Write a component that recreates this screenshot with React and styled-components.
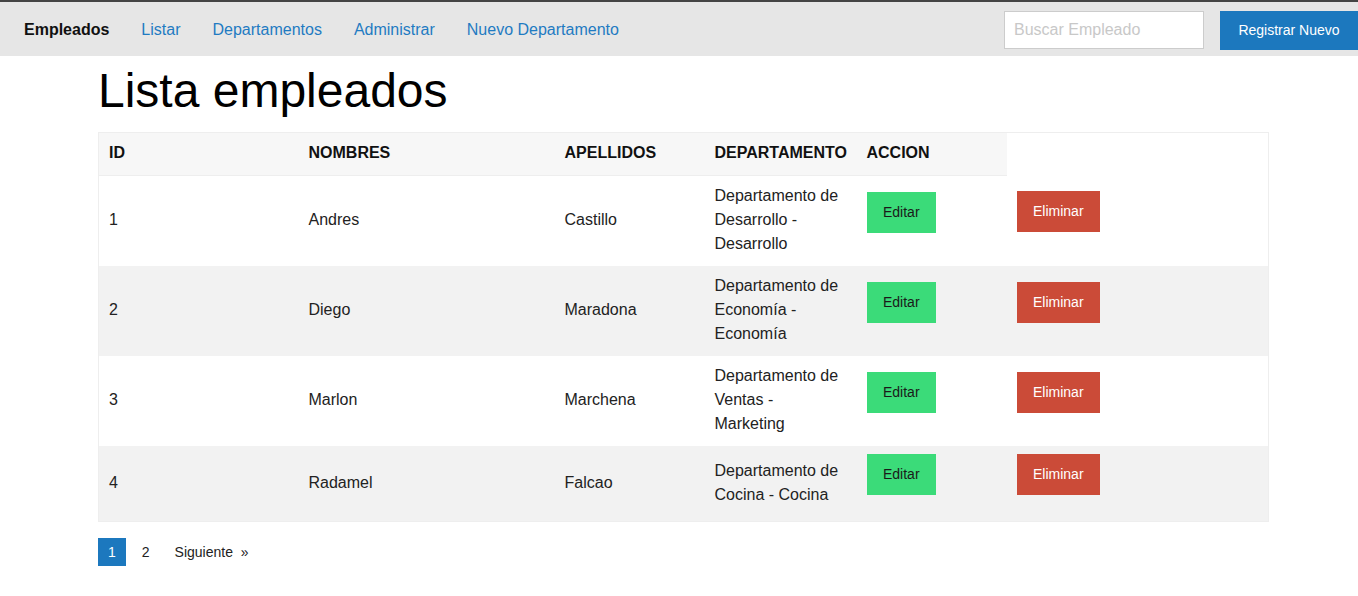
import React from "react"
import styled, { createGlobalStyle } from "styled-components"

const empleados = [
  { id: 1, nombre: "Andres", apellido: "Castillo", depto: "Departamento de Desarrollo - Desarrollo" },
  { id: 2, nombre: "Diego", apellido: "Maradona", depto: "Departamento de Economía - Economía" },
  { id: 3, nombre: "Marlon", apellido: "Marchena", depto: "Departamento de Ventas - Marketing" },
  { id: 4, nombre: "Radamel", apellido: "Falcao", depto: "Departamento de Cocina - Cocina" },
]

const columnas = [200, 256, 150, 152, 150, 262]

const links = ["Listar", "Departamentos", "Administrar", "Nuevo Departamento"]

export default function App() {
  return (
    <>
      <GlobalStyle />
      <NavBar>
        <Brand>Empleados</Brand>
        {links.map(l => <NavLink key={l} href="#">{l}</NavLink>)}
        <NavRight>
          <Search placeholder="Buscar Empleado" />
          <PrimaryButton>Registrar Nuevo</PrimaryButton>
        </NavRight>
      </NavBar>

      <Container>
        <Title>Lista empleados</Title>
        <Table>
          <colgroup>
            {columnas.map((w, i) => <col key={i} style={{ width: w }} />)}
          </colgroup>
          <thead>
            <tr>
              <Th>ID</Th>
              <Th>NOMBRES</Th>
              <Th>APELLIDOS</Th>
              <Th>DEPARTAMENTO</Th>
              <Th>ACCION</Th>
            </tr>
          </thead>
          <tbody>
            {empleados.map((e, i) => (
              <Row key={e.id} $odd={i % 2 === 1}>
                <Td>{e.id}</Td>
                <Td>{e.nombre}</Td>
                <Td>{e.apellido}</Td>
                <Td>{e.depto}</Td>
                <Td><ActionButton $kind="edit">Editar</ActionButton></Td>
                <Td><ActionButton $kind="delete">Eliminar</ActionButton></Td>
              </Row>
            ))}
          </tbody>
        </Table>

        <Pagination>
          <PageItem $active>1</PageItem>
          <PageItem>2</PageItem>
          <PageItem>Siguiente&nbsp;&nbsp;»</PageItem>
        </Pagination>
      </Container>
    </>
  )
}

const GlobalStyle = createGlobalStyle`
  body {
    margin: 0;
    font-family: "Liberation Sans", Arial, sans-serif;
    color: #111;
    background: #fff;
  }
`

const NavBar = styled.nav`
  display: flex;
  align-items: center;
  gap: 32px;
  height: 54px;
  padding-left: 24px;
  background: #e6e6e6;
  border-top: 2px solid #444;
  font-size: 16px;
`

const Brand = styled.span`
  font-weight: bold;
  color: #111;
  margin-top: 2px;
`

const NavLink = styled.a`
  color: #1f7bc2;
  text-decoration: none;
  margin-top: 2px;
`

const NavRight = styled.div`
  margin-left: auto;
  display: flex;
  align-items: center;
  gap: 16px;
  margin-top: 2px;
`

const Search = styled.input`
  box-sizing: border-box;
  width: 200px;
  height: 38px;
  padding: 0 9px;
  border: 1px solid #ccc;
  background: #fff;
  font-family: "Liberation Sans", Arial, sans-serif;
  font-size: 16px;
  outline: none;
  &::placeholder { color: #c8c8c8; }
`

const PrimaryButton = styled.button`
  box-sizing: border-box;
  width: 138px;
  height: 39px;
  border: none;
  background: #1c78be;
  color: #fff;
  font-family: "Liberation Sans", Arial, sans-serif;
  font-size: 14px;
  padding: 0;
`

const Container = styled.main`
  width: 1170px;
  margin-left: 98px;
`

const Title = styled.h1`
  margin: 7px 0 13px;
  font-size: 48px;
  line-height: 56px;
  font-weight: normal;
  color: #000;
`

const Table = styled.table`
  width: 1170px;
  table-layout: fixed;
  border-collapse: collapse;
  border: 1px solid #eeeeee;
  font-size: 16px;
  line-height: 24px;
`

const Th = styled.th`
  text-align: left;
  padding: 8px 10px 10px;
  background: #f7f7f7;
  border-bottom: 1px solid #eeeeee;
  font-weight: bold;
  white-space: nowrap;
  overflow: visible;
`

const Row = styled.tr`
  background: ${p => (p.$odd ? "#f2f2f2" : "#fff")};
`

const Td = styled.td`
  padding: 8px 10px 10px;
  vertical-align: middle;
  color: #222;
`

const ActionButton = styled.a`
  display: block;
  width: fit-content;
  margin: 0 0 16px;
  padding: 10px 16.5px;
  font-size: 14px;
  line-height: 21px;
  background: ${p => (p.$kind === "edit" ? "#3bdb79" : "#cb4b38")};
  color: ${p => (p.$kind === "edit" ? "#1a1a1a" : "#fff")};
  cursor: pointer;
`

const Pagination = styled.div`
  display: flex;
  align-items: center;
  margin-top: 16px;
  font-size: 14px;
`

const PageItem = styled.span`
  height: 28px;
  line-height: 28px;
  padding: 0 10px;
  margin-right: ${p => (p.$active ? "6px" : "5px")};
  background: ${p => (p.$active ? "#1c78be" : "transparent")};
  color: ${p => (p.$active ? "#fff" : "#222")};
`
